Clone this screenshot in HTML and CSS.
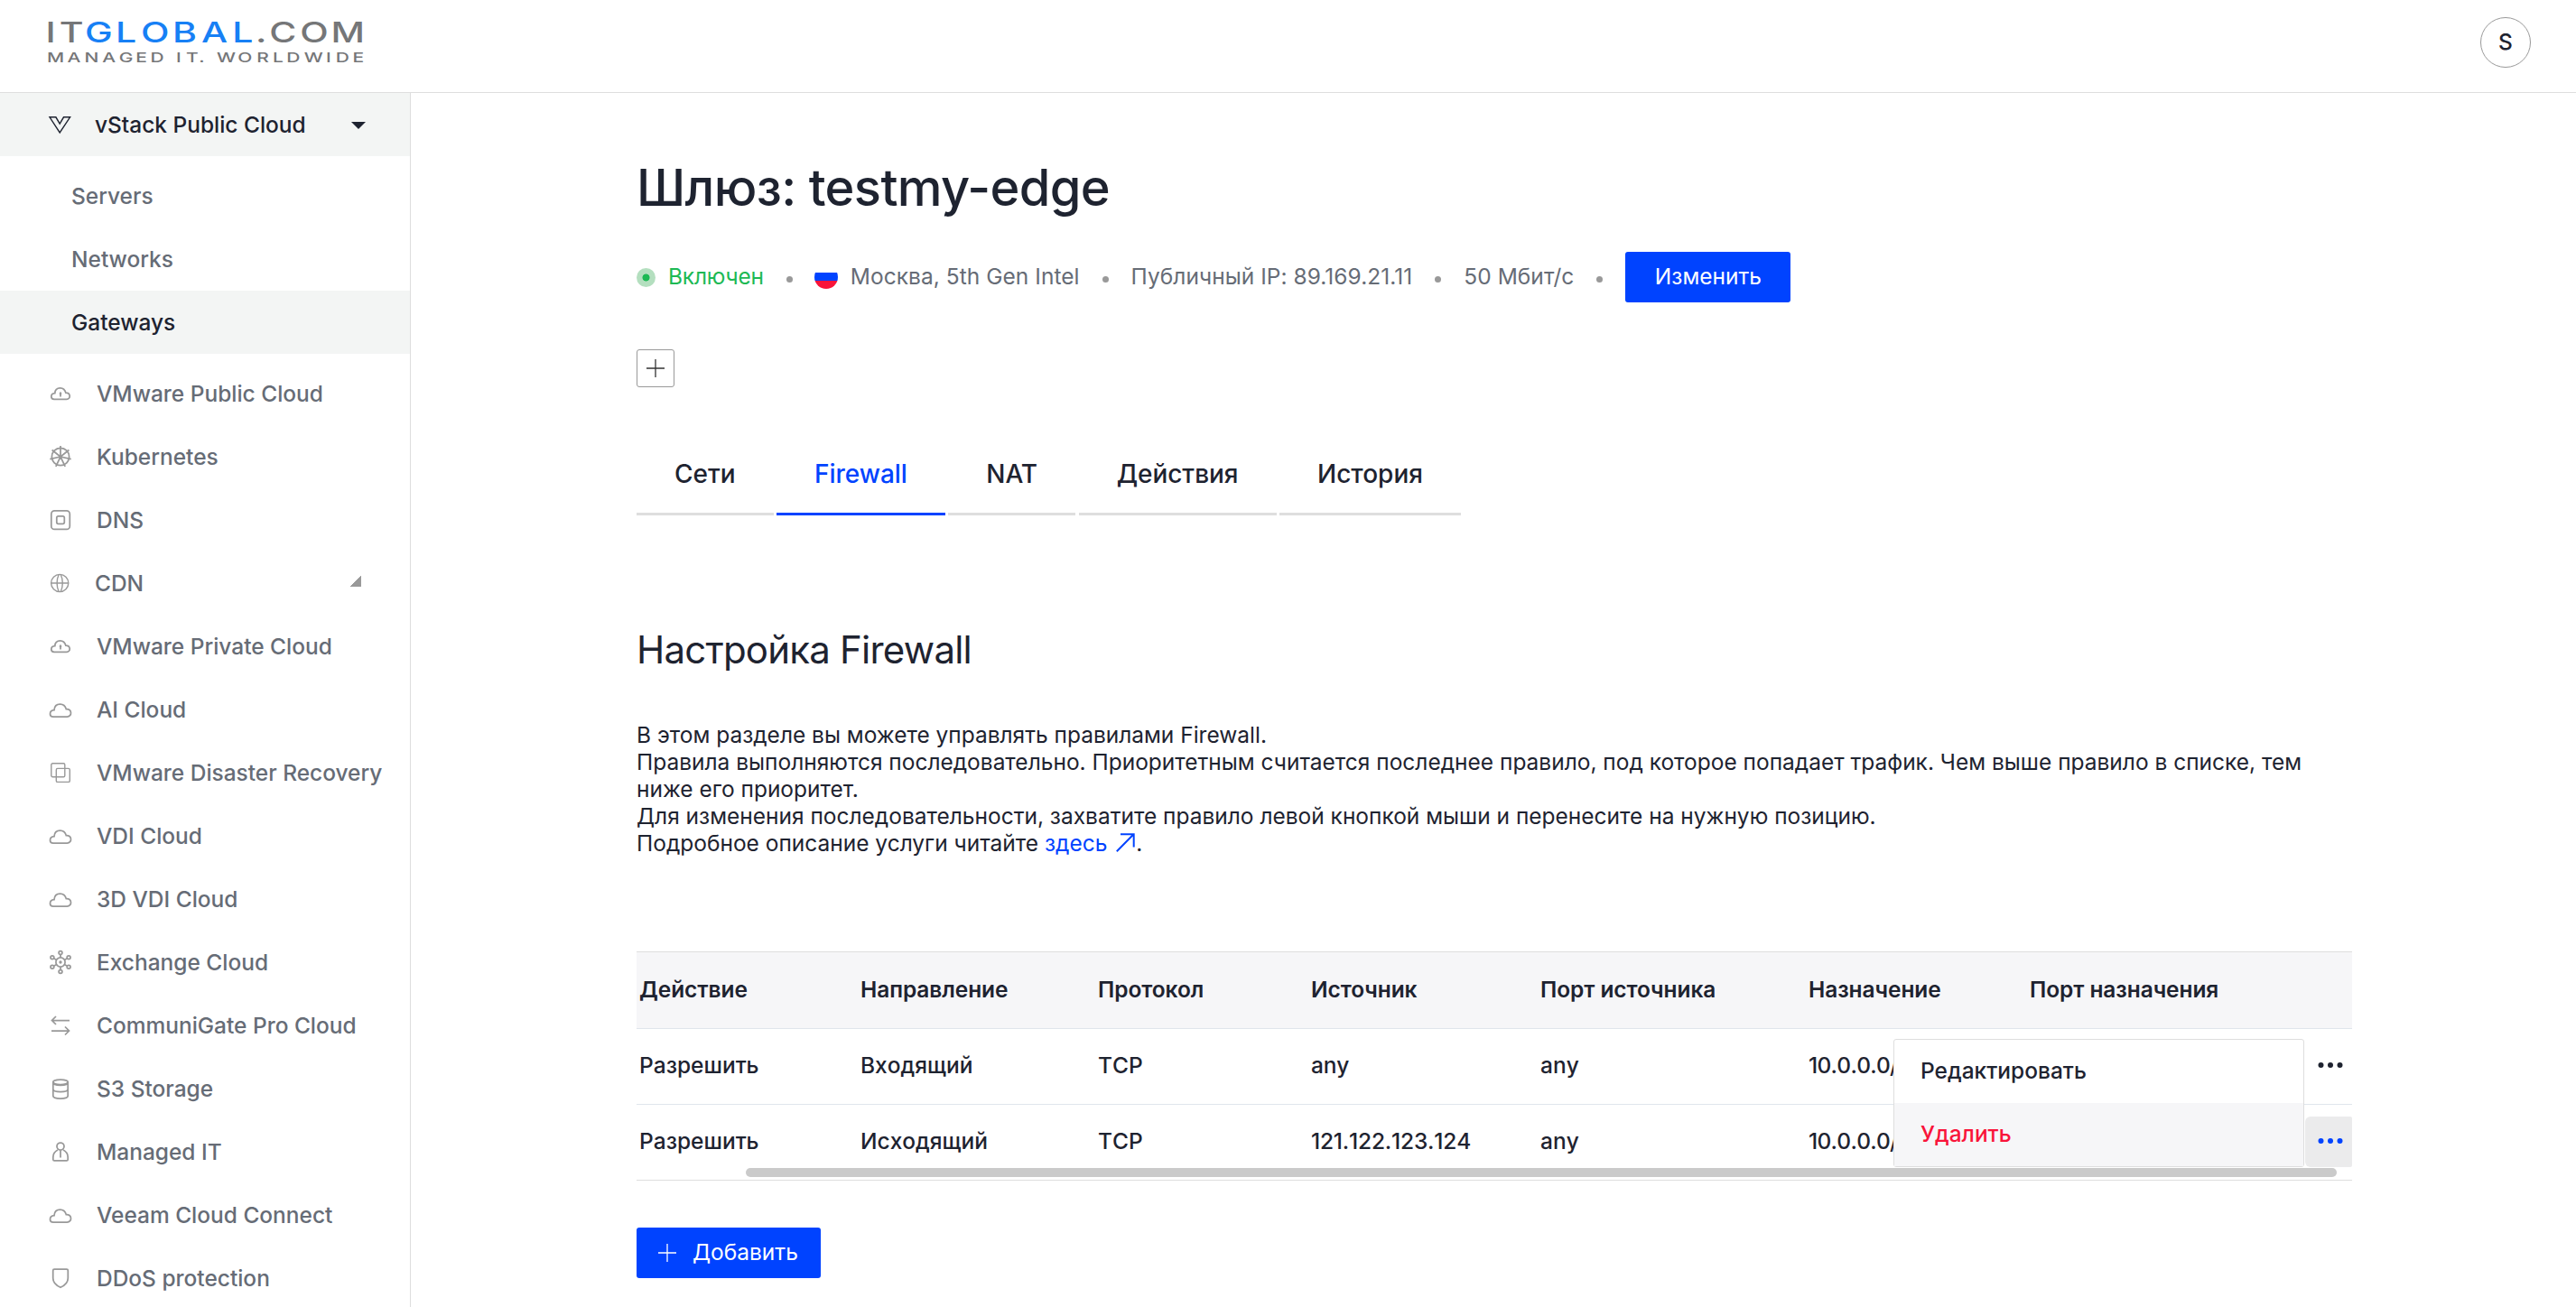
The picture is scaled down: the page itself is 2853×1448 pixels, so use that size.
FILE: index.html
```
<!DOCTYPE html>
<html lang="ru">
<head>
    <meta charset="UTF-8">
    <title>testmy-edge - ITGLOBAL.COM</title>
    <link rel="stylesheet" href="styles.css">
</head>
<body>
    <!-- icons -->
    <svg class="sprite">
        <symbol id="cloud" viewBox="0 0 28 28">
            <path d="M6 22H21.3C24 22 25.7 20 25.5 17.6C25.3 15 23.3 13.3 20.3 13.6C19.3 9.8 16.8 8 13.6 8C9.6 8 7.2 10.8 7 14.6C4.2 14.9 2.5 16.6 2.5 18.9C2.5 20.8 4 22 6 22Z"/>
        </symbol>
        <symbol id="cloud-up" viewBox="0 0 28 28">
            <path d="M7 20.3H20.8C23 20.3 24.3 18.7 24.2 16.7C24 14.6 22.4 13.2 19.9 13.2C19 9.7 16.7 7.8 13.6 7.8C10.2 7.8 8 10.2 7.8 13.6C5.3 13.8 3.8 15.4 3.8 17.3C3.8 19 5.2 20.3 7 20.3Z"/>
            <path d="M14 17.5V13.5M12.8 14H15.2M13.3 13.2H14.7"/>
        </symbol>
        <symbol id="wheel" viewBox="0 0 28 28">
            <circle cx="14" cy="14" r="9.6"/>
            <path d="M14 14V2M14 14L23.4 6.5M14 14L25.7 16.7M14 14L19.2 24.8M14 14L8.8 24.8M14 14L2.3 16.7M14 14L4.6 6.5"/>
        </symbol>
        <symbol id="dns" viewBox="0 0 28 28">
            <rect x="3.8" y="3.9" width="20.5" height="20.5" rx="3.5"/>
            <rect x="9.8" y="9.9" width="8.5" height="8.5" rx="1.8"/>
        </symbol>
        <symbol id="globe" viewBox="0 0 28 28">
            <circle cx="13.2" cy="14" r="9.6"/>
            <path d="M3.6 14H22.8M12.2 4.5C9.4 10 9.4 18 12.2 23.5M14.2 4.5C17 10 17 18 14.2 23.5"/>
        </symbol>
        <symbol id="copies" viewBox="0 0 28 28">
            <rect x="3.8" y="3.8" width="15" height="15" rx="1.5"/>
            <rect x="9.3" y="9.4" width="15" height="15" rx="1.5"/>
        </symbol>
        <symbol id="hub" viewBox="0 0 28 28">
            <circle cx="14" cy="14" r="5.1"/>
            <circle cx="14" cy="14" r=".8"/>
            <circle cx="14" cy="3.6" r="1.9"/>
            <circle cx="14" cy="24.4" r="1.9"/>
            <circle cx="4.9" cy="8.8" r="1.9"/>
            <circle cx="23.1" cy="8.8" r="1.9"/>
            <circle cx="4.9" cy="19.2" r="1.9"/>
            <circle cx="23.1" cy="19.2" r="1.9"/>
            <path d="M14 5.5V9M14 19V22.5M6.5 9.8L9.7 11.5M18.3 11.5L21.5 9.8M6.5 18.2L9.7 16.5M18.3 16.5L21.5 18.2"/>
        </symbol>
        <symbol id="swap" viewBox="0 0 28 28">
            <path d="M24 8.5H4.5M9 4L4.5 8.5L9 13M4 20H23.5M19 15.5L23.5 20L19 24.5"/>
        </symbol>
        <symbol id="storage" viewBox="0 0 28 28">
            <ellipse cx="14" cy="6.8" rx="8.2" ry="2.8"/>
            <path d="M5.8 6.8V22C5.8 23.8 9.5 25 14 25S22.2 23.8 22.2 22V6.8M5.8 14.7C5.8 16.5 9.5 17.5 14 17.5S22.2 16.5 22.2 14.7M5.8 7.5C5.8 9.3 9.5 10.3 14 10.3S22.2 9.3 22.2 7.5"/>
        </symbol>
        <symbol id="person" viewBox="0 0 28 28">
            <circle cx="14" cy="8" r="4"/>
            <path d="M11 12C7.5 13.8 5.8 16.5 5.8 20V22.5C5.8 23.4 6.4 23.9 7.2 23.9H20.8C21.6 23.9 22.2 23.4 22.2 22.5V20C22.2 16.5 20.5 13.8 17 12M14 12.5V20.5"/>
        </symbol>
        <symbol id="shield" viewBox="0 0 28 28">
            <path d="M7.2 4H20.8C21.8 4 22.3 4.6 22.3 5.5V14C22.3 18.5 18.5 22.3 14 24.2C9.5 22.3 5.7 18.5 5.7 14V5.5C5.7 4.6 6.2 4 7.2 4Z"/>
        </symbol>
        <symbol id="vstack" viewBox="0 0 28 28">
            <path d="M2 5.8H8.9L13.2 13.2L17.5 5.8H24.6L13.2 23Z"/>
        </symbol>
        <symbol id="plus" viewBox="0 0 20 20">
            <path d="M10 0V20M0 10H20"/>
        </symbol>
        <symbol id="dots" viewBox="0 0 28 8">
            <circle cx="3.5" cy="4" r="3"/>
            <circle cx="14" cy="4" r="3"/>
            <circle cx="24.5" cy="4" r="3"/>
        </symbol>
    </svg>

    <header class="header">
        <svg class="logo" width="360" height="72" viewBox="52 10 360 72">
            <text class="logo-name" transform="scale(1.3 1)" y="46.7" x="38.9 50.5"><tspan>IT</tspan><tspan class="logo-blue" x="72.4 98.4 120 147 171.6 197.8">GLOBAL</tspan><tspan x="217.8 229.4 255.6 282">.COM</tspan></text>
            <text class="logo-slogan" transform="scale(1.4 1)" y="68.7" x="37.1 53.2 66.7 80.9 94.2 107.4 119 130 139.3 147.2 157.3 162 171.4 188 203 215.8 226.6 240.5 257.8 265.6 278.9">MANAGED IT. WORLDWIDE</text>
        </svg>
        <div class="avatar">S</div>
    </header>

    <div class="page">
        <nav class="sidebar">
            <a class="nav-item narrow active"><svg class="icon"><use href="#vstack"/></svg>vStack Public Cloud<i class="caret"></i></a>
            <div class="subnav">
                <a class="nav-item">Servers</a>
                <a class="nav-item">Networks</a>
                <a class="nav-item active">Gateways</a>
            </div>
            <a class="nav-item"><svg class="icon"><use href="#cloud-up"/></svg>VMware Public Cloud</a>
            <a class="nav-item"><svg class="icon"><use href="#wheel"/></svg>Kubernetes</a>
            <a class="nav-item"><svg class="icon"><use href="#dns"/></svg>DNS</a>
            <a class="nav-item narrow"><svg class="icon thin"><use href="#globe"/></svg>CDN<i class="corner"></i></a>
            <a class="nav-item"><svg class="icon"><use href="#cloud-up"/></svg>VMware Private Cloud</a>
            <a class="nav-item"><svg class="icon"><use href="#cloud"/></svg>AI Cloud</a>
            <a class="nav-item"><svg class="icon thin"><use href="#copies"/></svg>VMware Disaster Recovery</a>
            <a class="nav-item"><svg class="icon"><use href="#cloud"/></svg>VDI Cloud</a>
            <a class="nav-item"><svg class="icon"><use href="#cloud"/></svg>3D VDI Cloud</a>
            <a class="nav-item"><svg class="icon"><use href="#hub"/></svg>Exchange Cloud</a>
            <a class="nav-item"><svg class="icon"><use href="#swap"/></svg>CommuniGate Pro Cloud</a>
            <a class="nav-item"><svg class="icon"><use href="#storage"/></svg>S3 Storage</a>
            <a class="nav-item"><svg class="icon"><use href="#person"/></svg>Managed IT</a>
            <a class="nav-item"><svg class="icon"><use href="#cloud"/></svg>Veeam Cloud Connect</a>
            <a class="nav-item"><svg class="icon"><use href="#shield"/></svg>DDoS protection</a>
        </nav>

        <main class="content">
            <h1>Шлюз: testmy-edge</h1>
            <div class="info">
                <span class="status">Включен</span>
                <i class="sep"></i>
                <span class="region"><svg class="flag" width="26" height="26" viewBox="0 0 26 26">
                    <clipPath id="round"><circle cx="13" cy="13" r="13"/></clipPath>
                    <g clip-path="url(#round)">
                        <path fill="#fff" d="M0 0H26V8H0Z"/>
                        <path fill="#0043ff" d="M0 8H26V17H0Z"/>
                        <path fill="#f9143a" d="M0 17H26V26H0Z"/>
                    </g>
                </svg>Москва, 5th Gen Intel</span>
                <i class="sep"></i>
                <span>Публичный IP: 89.169.21.11</span>
                <i class="sep"></i>
                <span>50 Мбит/с</span>
                <i class="sep"></i>
                <button class="btn btn-edit">Изменить</button>
            </div>
            <button class="add-tag"><svg width="20" height="20"><use href="#plus"/></svg></button>

            <div class="tabs">
                <a class="tab">Сети</a>
                <a class="tab current">Firewall</a>
                <a class="tab">NAT</a>
                <a class="tab">Действия</a>
                <a class="tab">История</a>
            </div>

            <h2>Настройка Firewall</h2>
            <p class="description">
                В этом разделе вы можете управлять правилами Firewall.<br>
                Правила выполняются последовательно. Приоритетным считается последнее правило, под которое попадает трафик. Чем выше правило в списке, тем ниже его приоритет.<br>
                Для изменения последовательности, захватите правило левой кнопкой мыши и перенесите на нужную позицию.<br>
                Подробное описание услуги читайте <a class="link">здесь<svg class="external" width="21" height="21" viewBox="0 0 21 21"><path d="M.8 20.2L19.5 1.3M5 1.3H19.7V15.5"/></svg></a>.
            </p>

            <div class="table-box">
                <table class="rules">
                    <colgroup>
                        <col class="c-action"><col class="c-direction"><col class="c-protocol"><col class="c-source">
                        <col class="c-source-port"><col class="c-target"><col class="c-target-port"><col class="c-menu">
                    </colgroup>
                    <thead>
                        <tr>
                            <th>Действие</th>
                            <th>Направление</th>
                            <th>Протокол</th>
                            <th>Источник</th>
                            <th>Порт источника</th>
                            <th>Назначение</th>
                            <th>Порт назначения</th>
                            <th></th>
                        </tr>
                    </thead>
                    <tbody>
                        <tr>
                            <td>Разрешить</td>
                            <td>Входящий</td>
                            <td>TCP</td>
                            <td>any</td>
                            <td>any</td>
                            <td>10.0.0.0/24</td>
                            <td></td>
                            <td class="menu-cell"><button class="more"><svg width="28" height="8"><use href="#dots"/></svg></button></td>
                        </tr>
                        <tr>
                            <td>Разрешить</td>
                            <td>Исходящий</td>
                            <td>TCP</td>
                            <td>121.122.123.124</td>
                            <td>any</td>
                            <td>10.0.0.0/24</td>
                            <td></td>
                            <td class="menu-cell"><button class="more open"><svg width="28" height="8"><use href="#dots"/></svg></button></td>
                        </tr>
                    </tbody>
                </table>
                <div class="scrollbar"></div>
                <div class="menu">
                    <a class="menu-item">Редактировать</a>
                    <a class="menu-item delete">Удалить</a>
                </div>
            </div>

            <button class="btn btn-add"><svg width="20" height="20"><use href="#plus"/></svg>Добавить</button>
        </main>
    </div>
</body>
</html>
```
FILE: styles.css
```
* {
    box-sizing: border-box;
}
body {
    margin: 0;
    height: 1448px;
    overflow: hidden;
    font-family: Inter, "Noto Sans", sans-serif;
    font-size: 24.5px;
    line-height: 29.75px;
    color: #1e2330;
    background: #fff;
}
button {
    font: inherit;
    margin: 0;
    padding: 0;
    border: 0;
}
svg {
    flex: none;
    fill: none;
    stroke: currentColor;
}
.sprite {
    display: none;
}

/* header */
.header {
    display: flex;
    justify-content: space-between;
    height: 103px;
    padding: 19px 50px 0 52px;
    border-bottom: 1px solid #dedede;
}
.logo {
    margin-top: -9px;
    fill: #757678;
    stroke: none;
    overflow: visible;
}
.logo-name {
    font-size: 31.6px;
    font-weight: 500;
}
.logo-slogan {
    font-size: 15px;
    font-weight: 500;
}
.logo-blue {
    fill: #1780f5;
}
.avatar {
    display: flex;
    align-items: center;
    justify-content: center;
    width: 56px;
    height: 56px;
    border: 1px solid #999;
    border-radius: 50%;
    font-weight: 500;
}

/* sidebar */
.page {
    display: flex;
    height: 1345px;
}
.sidebar {
    flex: none;
    width: 455px;
    border-right: 1px solid #dedede;
    font-weight: 500;
    letter-spacing: -.02px;
}
.nav-item {
    display: flex;
    align-items: center;
    height: 70px;
    padding: 1px 0 0 53px;
    color: #666c76;
    white-space: nowrap;
}
.icon {
    width: 28px;
    height: 28px;
    margin: -1px 26px 0 0;
    color: #999;
    stroke-width: 1.75;
}
.icon.thin {
    stroke-width: 1.4;
}
.narrow .icon {
    margin-right: 24px;
}
.nav-item.active {
    color: #1e2330;
    background: #f3f5f4;
}
.active .icon {
    color: #1e2330;
    stroke-width: 1.4;
}
.subnav {
    padding: 9px 0;
}
.subnav .nav-item {
    padding-left: 79px;
}
.caret {
    margin: 0 49px 0 auto;
    border: 8px solid transparent;
    border-top-color: #1e2330;
    border-bottom: 0;
}
.corner {
    width: 12px;
    height: 12px;
    margin: -5px 54px 0 auto;
    background: linear-gradient(135deg, transparent 50%, #999 50%);
}

/* content */
.content {
    width: 2150px;
    padding: 71px 0 0 250px;
}
h1 {
    margin: 0 0 37px;
    font-size: 56px;
    font-weight: 500;
    line-height: 68px;
    letter-spacing: -.65px;
}
.info {
    display: flex;
    align-items: center;
    height: 56px;
    color: #666c76;
    letter-spacing: .04px;
}
.status {
    display: flex;
    align-items: center;
    color: #1db954;
    letter-spacing: -.2px;
}
.status::before {
    content: "";
    width: 21px;
    height: 21px;
    margin-right: 14px;
    border-radius: 50%;
    background: radial-gradient(circle, #1db954 3.6px, #b4dfbf 4.4px);
}
.sep {
    width: 7px;
    height: 7px;
    margin: 5px 25px 0;
    border-radius: 50%;
    background: #999;
}
.region {
    display: flex;
    align-items: center;
}
.flag {
    margin: 0 14px 0 -1px;
    stroke: none;
}
.btn {
    height: 56px;
    border-radius: 3px;
    color: #fff;
    background: #0043ff;
}
.btn-edit {
    width: 183px;
}
.add-tag {
    display: flex;
    align-items: center;
    justify-content: center;
    width: 42px;
    height: 42px;
    margin-top: 52px;
    border: 1px solid #999;
    border-radius: 3px;
    color: #333;
    background: #fff;
    stroke-width: 1.3;
}
.tabs {
    display: flex;
    gap: 3.5px;
    margin-top: 52px;
    font-size: 28px;
    font-weight: 500;
    line-height: 34px;
    letter-spacing: -.03px;
}
.tab {
    height: 90px;
    padding: 27px 42px 0;
    border-bottom: 3px solid #dedede;
}
.tab.current {
    color: #0043ff;
    border-color: #0043ff;
}
h2 {
    margin: 123px 0 55px;
    font-size: 42px;
    font-weight: 400;
    line-height: 51px;
    letter-spacing: -.78px;
}
.description {
    margin: 0 0 104px;
    line-height: 29.95px;
    letter-spacing: -.01px;
}
.link {
    color: #0043ff;
}
.external {
    margin: 0 1px -1px 10px;
    stroke-width: 2;
}

/* rules table */
.table-box {
    position: relative;
    width: 1900px;
    border-top: 1px solid #dedede;
    border-bottom: 1px solid #dedede;
}
.rules {
    width: 1900px;
    table-layout: fixed;
    border-collapse: separate;
    border-spacing: 0;
    font-weight: 500;
}
.rules th,
.rules td {
    height: 84px;
    padding: 0 0 0 3px;
    text-align: left;
    white-space: nowrap;
    border-bottom: 1px solid #e0e5ec;
}
.rules th {
    height: 85px;
    padding-top: 1px;
    font-weight: 600;
    letter-spacing: -.08px;
    background: #f6f6f8;
}
.rules tr:last-child td {
    height: 83px;
    border-bottom: 0;
}
.rules td {
    font-kerning: none;
}
.rules td:nth-child(4) {
    letter-spacing: -.2px;
}
/* keeps the slash of the subnet visible beside the open menu */
.rules td:nth-child(6) {
    letter-spacing: -.7px;
}
.c-action { width: 245px; }
.c-direction { width: 263px; }
.c-protocol { width: 236px; }
.c-source { width: 254px; }
.c-source-port { width: 297px; }
.c-target { width: 245px; }
.c-target-port { width: 308px; }
.c-menu { width: 52px; }
.rules .menu-cell {
    padding: 0;
}
.more {
    display: flex;
    align-items: center;
    justify-content: center;
    width: 52px;
    height: 56px;
    color: #1e2330;
    background: none;
}
.more svg {
    margin: -3px 0 0 4px;
    fill: currentColor;
    stroke: none;
}
.more.open {
    color: #0043ff;
    background: #ebebec;
    border-radius: 6px 2px 2px 6px;
}
.scrollbar {
    position: absolute;
    left: 121px;
    right: 17px;
    bottom: 3px;
    height: 10px;
    border-radius: 5px;
    background: #cacaca;
}
.menu {
    position: absolute;
    right: 53px;
    bottom: 14px;
    width: 455px;
    border: 1px solid #dedede;
    border-radius: 3px;
    background: #fff;
    font-weight: 500;
}
.menu-item {
    display: flex;
    align-items: center;
    height: 70px;
    padding: 1px 0 0 29px;
}
.menu-item.delete {
    color: #f9143a;
    background: #f6f6f8;
}
.btn-add {
    display: flex;
    align-items: center;
    width: 204px;
    margin-top: 52px;
    padding-left: 24px;
    stroke-width: 1.3;
}
.btn-add svg {
    margin-right: 18px;
}
```
